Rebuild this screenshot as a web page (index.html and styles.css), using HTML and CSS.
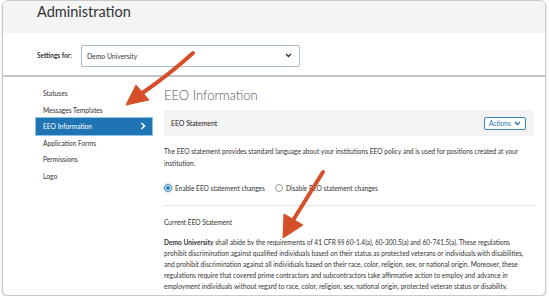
FILE: index.html
```html
<!DOCTYPE html>
<html lang="en">
<head>
<meta charset="UTF-8">
<title>Administration - EEO Information</title>
<link rel="stylesheet" href="styles.css">
</head>
<body>
<div class="frame">
  <div class="page-head">
    <h1>Administration</h1>
  </div>
  <div class="settings-bar">
    <label class="settings-label">Settings for:</label>
    <div class="select-box">
      <span>Demo University</span>
      <svg class="select-caret" width="7" height="5" viewBox="0 0 7 5"><path d="M1 1 L3.5 3.5 L6 1" fill="none" stroke="#333" stroke-width="1.4"/></svg>
    </div>
  </div>
  <div class="layout">
    <ul class="side-nav">
      <li>Statuses</li>
      <li>Messages Templates</li>
      <li class="active">EEO Information
        <svg width="6" height="8" viewBox="0 0 6 8"><path d="M1.5 1 L4.5 4 L1.5 7" fill="none" stroke="#fff" stroke-width="1.6"/></svg>
      </li>
      <li>Application Forms</li>
      <li>Permissions</li>
      <li>Logo</li>
    </ul>
    <div class="content">
      <h2>EEO Information</h2>
      <div class="panel-head">
        <span>EEO Statement</span>
        <button class="btn-actions">Actions
          <svg width="7" height="5" viewBox="0 0 7 5"><path d="M1 1 L3.5 3.5 L6 1" fill="none" stroke="#2a70b0" stroke-width="1.3"/></svg>
        </button>
      </div>
      <p class="intro">The EEO statement provides standard language about your institutions EEO policy and is used for positions created at your institution.</p>
      <div class="radios">
        <label class="radio"><span class="dot checked"></span>Enable EEO statement changes</label>
        <label class="radio"><span class="dot"></span>Disable EEO statement changes</label>
      </div>
      <hr class="divider">
      <h3>Current EEO Statement</h3>
      <p class="statement"><strong>Demo University</strong> shall abide by the requirements of 41 CFR §§ 60-1.4(a), 60-300.5(a) and 60-741.5(a). These regulations prohibit discrimination against qualified individuals based on their status as protected veterans or individuals with disabilities, and prohibit discrimination against all individuals based on their race, color, religion, sex, or national origin. Moreover, these regulations require that covered prime contractors and subcontractors take affirmative action to employ and advance in employment individuals without regard to race, color, religion, sex, national origin, protected veteran status or disability.</p>
    </div>
  </div>
</div>

<!-- annotation arrows drawn over the screenshot -->
<svg class="arrows" width="549" height="300" viewBox="0 0 549 300">
  <g fill="#d5502a" stroke="#d5502a">
    <path d="M193 53 Q170 74 141 94" fill="none" stroke-width="4" stroke-linecap="round"/>
    <polygon points="126,105 136,85 149,100" stroke-width="1" stroke-linejoin="round"/>
    <path d="M323 172 L292 222" fill="none" stroke-width="4" stroke-linecap="round"/>
    <polygon points="283,238 284,214 303,225" stroke-width="1" stroke-linejoin="round"/>
  </g>
</svg>
</body>
</html>
```

FILE: styles.css
```css
body {
  margin: 0;
  background: #fff;
  font-family: Lato, 'Liberation Sans', sans-serif;
  font-size: 6.6px;
  color: #333;
  position: relative;
}

.frame {
  margin: 0 3px 0 2px;
  height: 294px;
  border: 1px solid #c9c9c9;
  border-radius: 6px;
  overflow: hidden;
  box-shadow: 0 1px 2px rgba(0, 0, 0, 0.25);
}

.page-head {
  height: 30px;
  background: #f4f4f4;
  padding: 2px 0 0 34px;
}

.page-head h1 {
  margin: 0;
  font-size: 14.5px;
  line-height: 17px;
  font-weight: 400;
  color: #333;
}

.settings-bar {
  height: 39px;
  border-bottom: 2px solid #c4c4c4;
  display: flex;
  align-items: center;
  padding: 3px 0 0 34px;
}

.settings-label {
  width: 44px;
  font-weight: 700;
  font-size: 6.5px;
}

.select-box {
  width: 205px;
  height: 20px;
  border: 1px solid #a9bdd1;
  border-radius: 2px;
  display: flex;
  align-items: center;
  justify-content: space-between;
  padding: 0 7px 0 5px;
  font-size: 6.8px;
}

.layout {
  display: flex;
  gap: 12px;
  padding: 8px 10px 0 33px;
}

.side-nav {
  list-style: none;
  margin: 0;
  padding: 0;
  width: 116px;
  flex-shrink: 0;
}

.side-nav li {
  height: 16.5px;
  line-height: 16.5px;
  padding-left: 7px;
  font-size: 6.7px;
}

.side-nav li.active {
  background: #1f74b4;
  color: #fff;
  box-shadow: 0 0 0 1px #8fc2e8;
  display: flex;
  align-items: center;
  justify-content: space-between;
  padding-right: 6px;
}

.content {
  width: 370px;
}

.content h2 {
  margin: 1px 0 6px;
  font-size: 13px;
  line-height: 18px;
  font-weight: 300;
  color: #555;
}

.panel-head {
  height: 26px;
  background: #f3f3f3;
  display: flex;
  align-items: center;
  justify-content: space-between;
  padding: 0 8px 0 7px;
  color: #222;
  font-size: 6.9px;
}

.btn-actions {
  height: 13px;
  width: 42px;
  padding: 0 4px;
  border: 1px solid #3a84c2;
  border-radius: 2px;
  background: #fff;
  color: #2a70b0;
  font-family: inherit;
  font-size: 6.6px;
  display: flex;
  align-items: center;
  justify-content: space-between;
}

.intro {
  margin: 9px 0 0;
  line-height: 12px;
}

.radios {
  display: flex;
  gap: 10px;
  margin-top: 13px;
  line-height: 12px;
}

.radio {
  display: flex;
  align-items: center;
  gap: 3px;
}

.dot {
  width: 6px;
  height: 6px;
  border: 1px solid #999;
  border-radius: 50%;
  display: flex;
  align-items: center;
  justify-content: center;
}

.dot.checked {
  border-color: #2a7ab8;
  box-shadow: 0 0 0 1px #cfe3f3;
}

.dot.checked::after {
  content: "";
  width: 4px;
  height: 4px;
  border-radius: 50%;
  background: #2a7ab8;
}

.divider {
  margin: 11px 0 0;
  border: 0;
  border-top: 1px solid #e6e6e6;
}

.content h3 {
  margin: 10px 0 0;
  font-size: 6.6px;
  font-weight: 400;
  line-height: 12px;
}

.statement {
  margin: 9px 0 0;
  line-height: 11px;
}

.statement strong {
  font-weight: 700;
}

.arrows {
  position: absolute;
  top: 0;
  left: 0;
  pointer-events: none;
}
```
